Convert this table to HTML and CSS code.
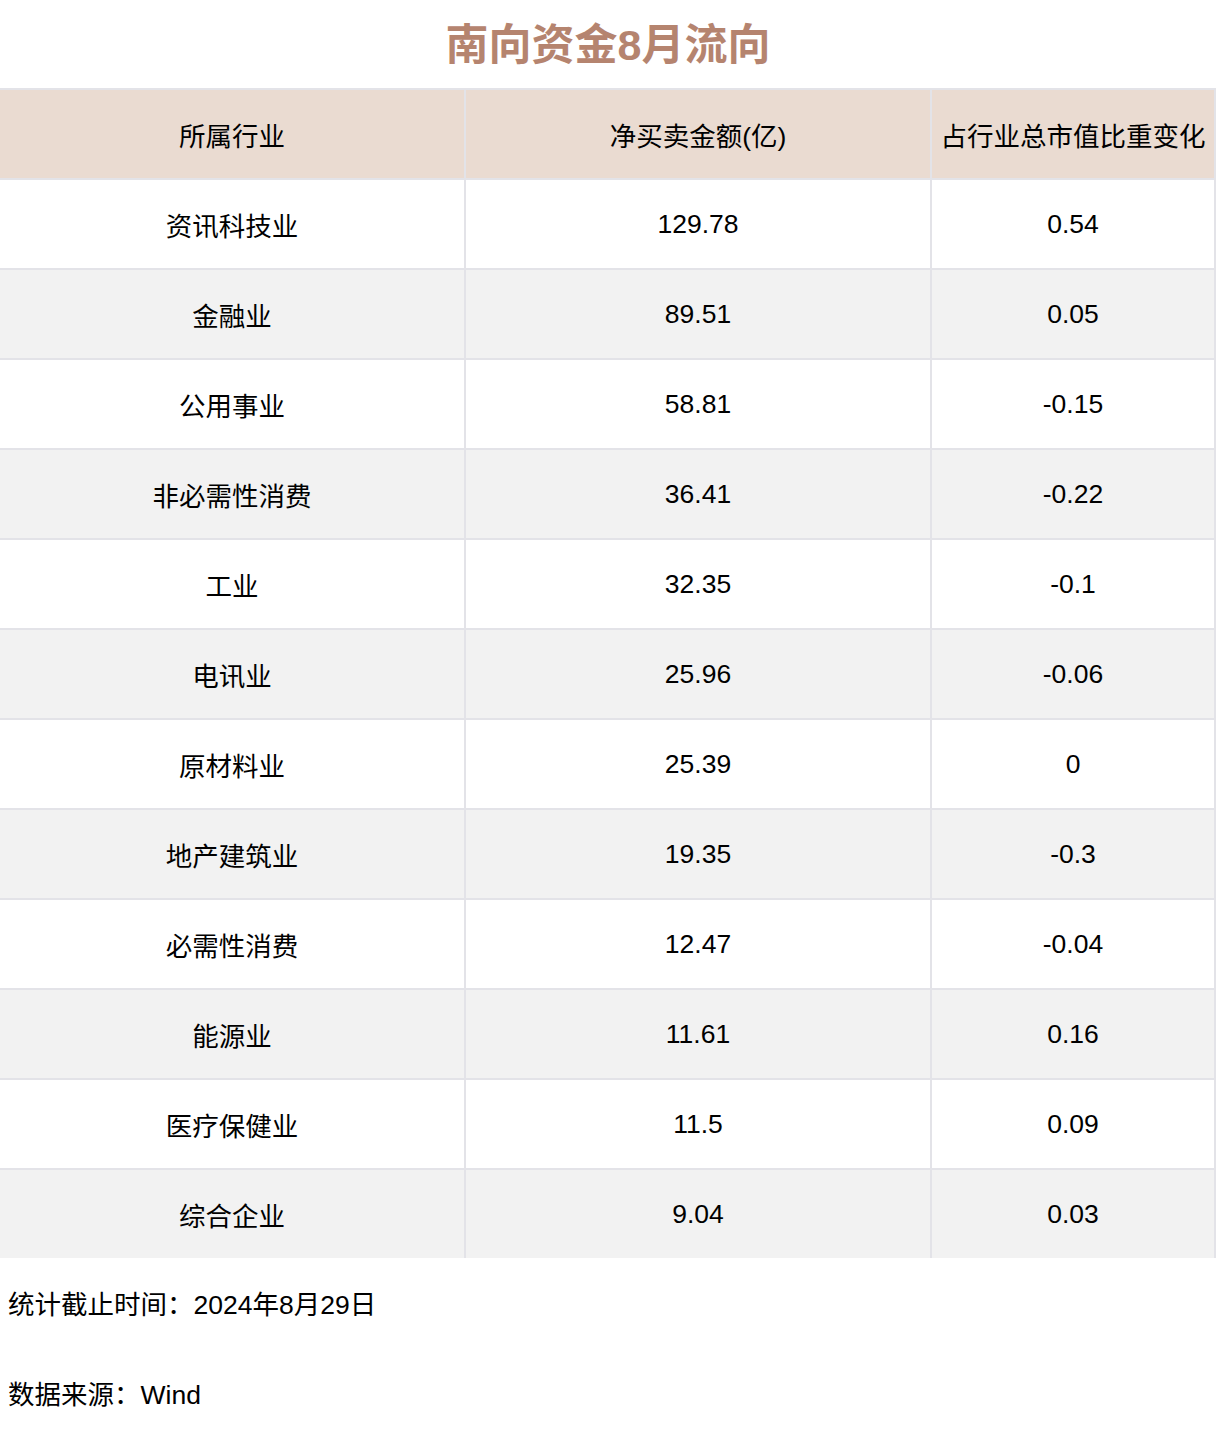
FILE: index.html
```html
<!DOCTYPE html>
<html lang="zh-CN">
<head>
<meta charset="utf-8">
<title>南向资金8月流向</title>
<link rel="stylesheet" href="styles.css">
</head>
<body>
<div class="page">
  <h1 class="title">南向资金8月流向</h1>
  <div class="table">
    <div class="cell head">所属行业</div>
    <div class="cell head">净买卖金额(亿)</div>
    <div class="cell head">占行业总市值比重变化</div>

    <div class="cell">资讯科技业</div><div class="cell">129.78</div><div class="cell">0.54</div>
    <div class="cell alt">金融业</div><div class="cell alt">89.51</div><div class="cell alt">0.05</div>
    <div class="cell">公用事业</div><div class="cell">58.81</div><div class="cell">-0.15</div>
    <div class="cell alt">非必需性消费</div><div class="cell alt">36.41</div><div class="cell alt">-0.22</div>
    <div class="cell">工业</div><div class="cell">32.35</div><div class="cell">-0.1</div>
    <div class="cell alt">电讯业</div><div class="cell alt">25.96</div><div class="cell alt">-0.06</div>
    <div class="cell">原材料业</div><div class="cell">25.39</div><div class="cell">0</div>
    <div class="cell alt">地产建筑业</div><div class="cell alt">19.35</div><div class="cell alt">-0.3</div>
    <div class="cell">必需性消费</div><div class="cell">12.47</div><div class="cell">-0.04</div>
    <div class="cell alt">能源业</div><div class="cell alt">11.61</div><div class="cell alt">0.16</div>
    <div class="cell">医疗保健业</div><div class="cell">11.5</div><div class="cell">0.09</div>
    <div class="cell alt">综合企业</div><div class="cell alt">9.04</div><div class="cell alt">0.03</div>
  </div>
  <div class="notes">
    <p class="note">统计截止时间：2024年8月29日</p>
    <p class="note">数据来源：Wind</p>
  </div>
</div>
</body>
</html>
```
FILE: styles.css
```css
html, body {
  margin: 0;
  padding: 0;
  background: #ffffff;
}

.page {
  width: 1216px;
  font-family: "Liberation Sans", "Noto Sans CJK SC", sans-serif;
  color: #000000;
}

.title {
  margin: 0;
  height: 88px;
  box-sizing: border-box;
  padding-bottom: 6px;
  display: flex;
  align-items: center;
  justify-content: center;
  font-size: 43px;
  font-weight: 700;
  color: #b5846f;
}

.table {
  display: grid;
  grid-template-columns: 464px 464px 282px;
  grid-auto-rows: 88px;
  gap: 2px;
  padding: 2px 2px 0 0;
  background: #e3e3e8;
}

.cell {
  display: flex;
  align-items: center;
  justify-content: center;
  background: #ffffff;
  font-size: 26.5px;
  white-space: nowrap;
}

.cell.head {
  background: #eadbd1;
}

.cell.alt {
  background: #f2f2f2;
}

.notes {
  display: flex;
  flex-direction: column;
  gap: 54px;
  padding: 29px 0 0 8px;
}

.note {
  margin: 0;
  font-size: 26.5px;
  line-height: 36px;
}

.note-colon {
  display: inline-block;
}
```
